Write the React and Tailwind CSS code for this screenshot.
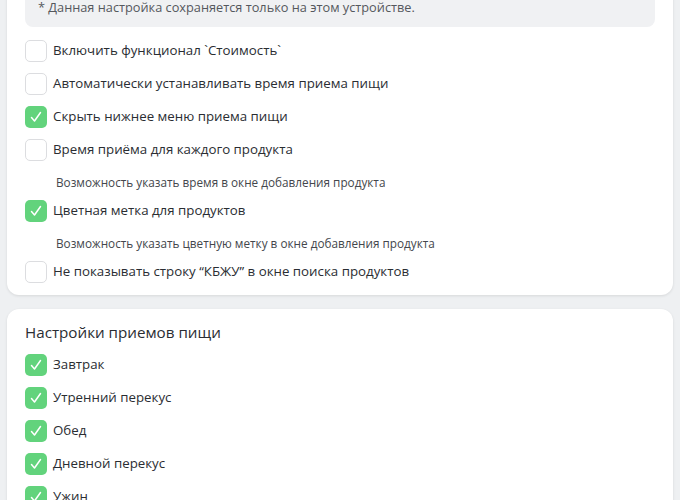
import React from "react";

function Check({ checked }) {
  return (
    <div
      className={
        "w-[22px] h-[22px] rounded-[5px] flex items-center justify-center shrink-0 " +
        (checked ? "bg-[#62d37c]" : "bg-white border border-[#dcdde0]")
      }
    >
      {checked && (
        <svg width="14" height="14" viewBox="0 0 14 14" fill="none">
          <path d="M2.5 7.5 L5.5 11 L11.5 2.5" stroke="white" strokeWidth="1.5" strokeLinecap="round" strokeLinejoin="round" />
        </svg>
      )}
    </div>
  );
}

function Row({ checked, label }) {
  return (
    <div className="flex items-center gap-[6px] h-[22px]">
      <Check checked={checked} />
      <span className="text-[13.3px] font-medium text-[#2a2d32]">{label}</span>
    </div>
  );
}

function Sub({ children }) {
  return <div className="pl-[31px] text-[11.75px] leading-[16px] text-[#44474c]">{children}</div>;
}

export default function App() {
  return (
    <div
      className="min-h-screen bg-[#eef0f2] px-[7px] overflow-hidden"
      style={{ fontFamily: '"Open Sans", "Noto Sans", sans-serif' }}
    >
      <div className="bg-white rounded-[12px] shadow-[0_1px_3px_rgba(0,0,0,0.1)] px-[18px] pt-[18px] pb-[12px] mt-[-31px]">
        <div className="bg-[#f0f1f3] rounded-[8px] px-[13px] py-[10px] text-[12.75px] leading-[20px] text-[#55585d]">
          * Данная настройка сохраняется только на этом устройстве.
        </div>
        <div className="flex flex-col mt-[13px]">
          <div className="flex flex-col gap-[11px]">
            <Row checked={false} label="Включить функционал `Стоимость`" />
            <Row checked={false} label="Автоматически устанавливать время приема пищи" />
            <Row checked={true} label="Скрыть нижнее меню приема пищи" />
            <Row checked={false} label="Время приёма для каждого продукта" />
          </div>
          <div className="mt-[13px] mb-[10px]">
            <Sub>Возможность указать время в окне добавления продукта</Sub>
          </div>
          <Row checked={true} label="Цветная метка для продуктов" />
          <div className="mt-[13px] mb-[10px]">
            <Sub>Возможность указать цветную метку в окне добавления продукта</Sub>
          </div>
          <Row checked={false} label="Не показывать строку “КБЖУ” в окне поиска продуктов" />
        </div>
      </div>
      <div className="bg-white rounded-[12px] shadow-[0_1px_3px_rgba(0,0,0,0.1)] px-[18px] pt-[12px] pb-[18px] mt-[14px]">
        <div className="text-[15.2px] leading-[22px] font-medium text-[#2a2d32]">Настройки приемов пищи</div>
        <div className="flex flex-col gap-[11px] mt-[11px]">
          <Row checked={true} label="Завтрак" />
          <Row checked={true} label="Утренний перекус" />
          <Row checked={true} label="Обед" />
          <Row checked={true} label="Дневной перекус" />
          <Row checked={true} label="Ужин" />
        </div>
      </div>
    </div>
  );
}
